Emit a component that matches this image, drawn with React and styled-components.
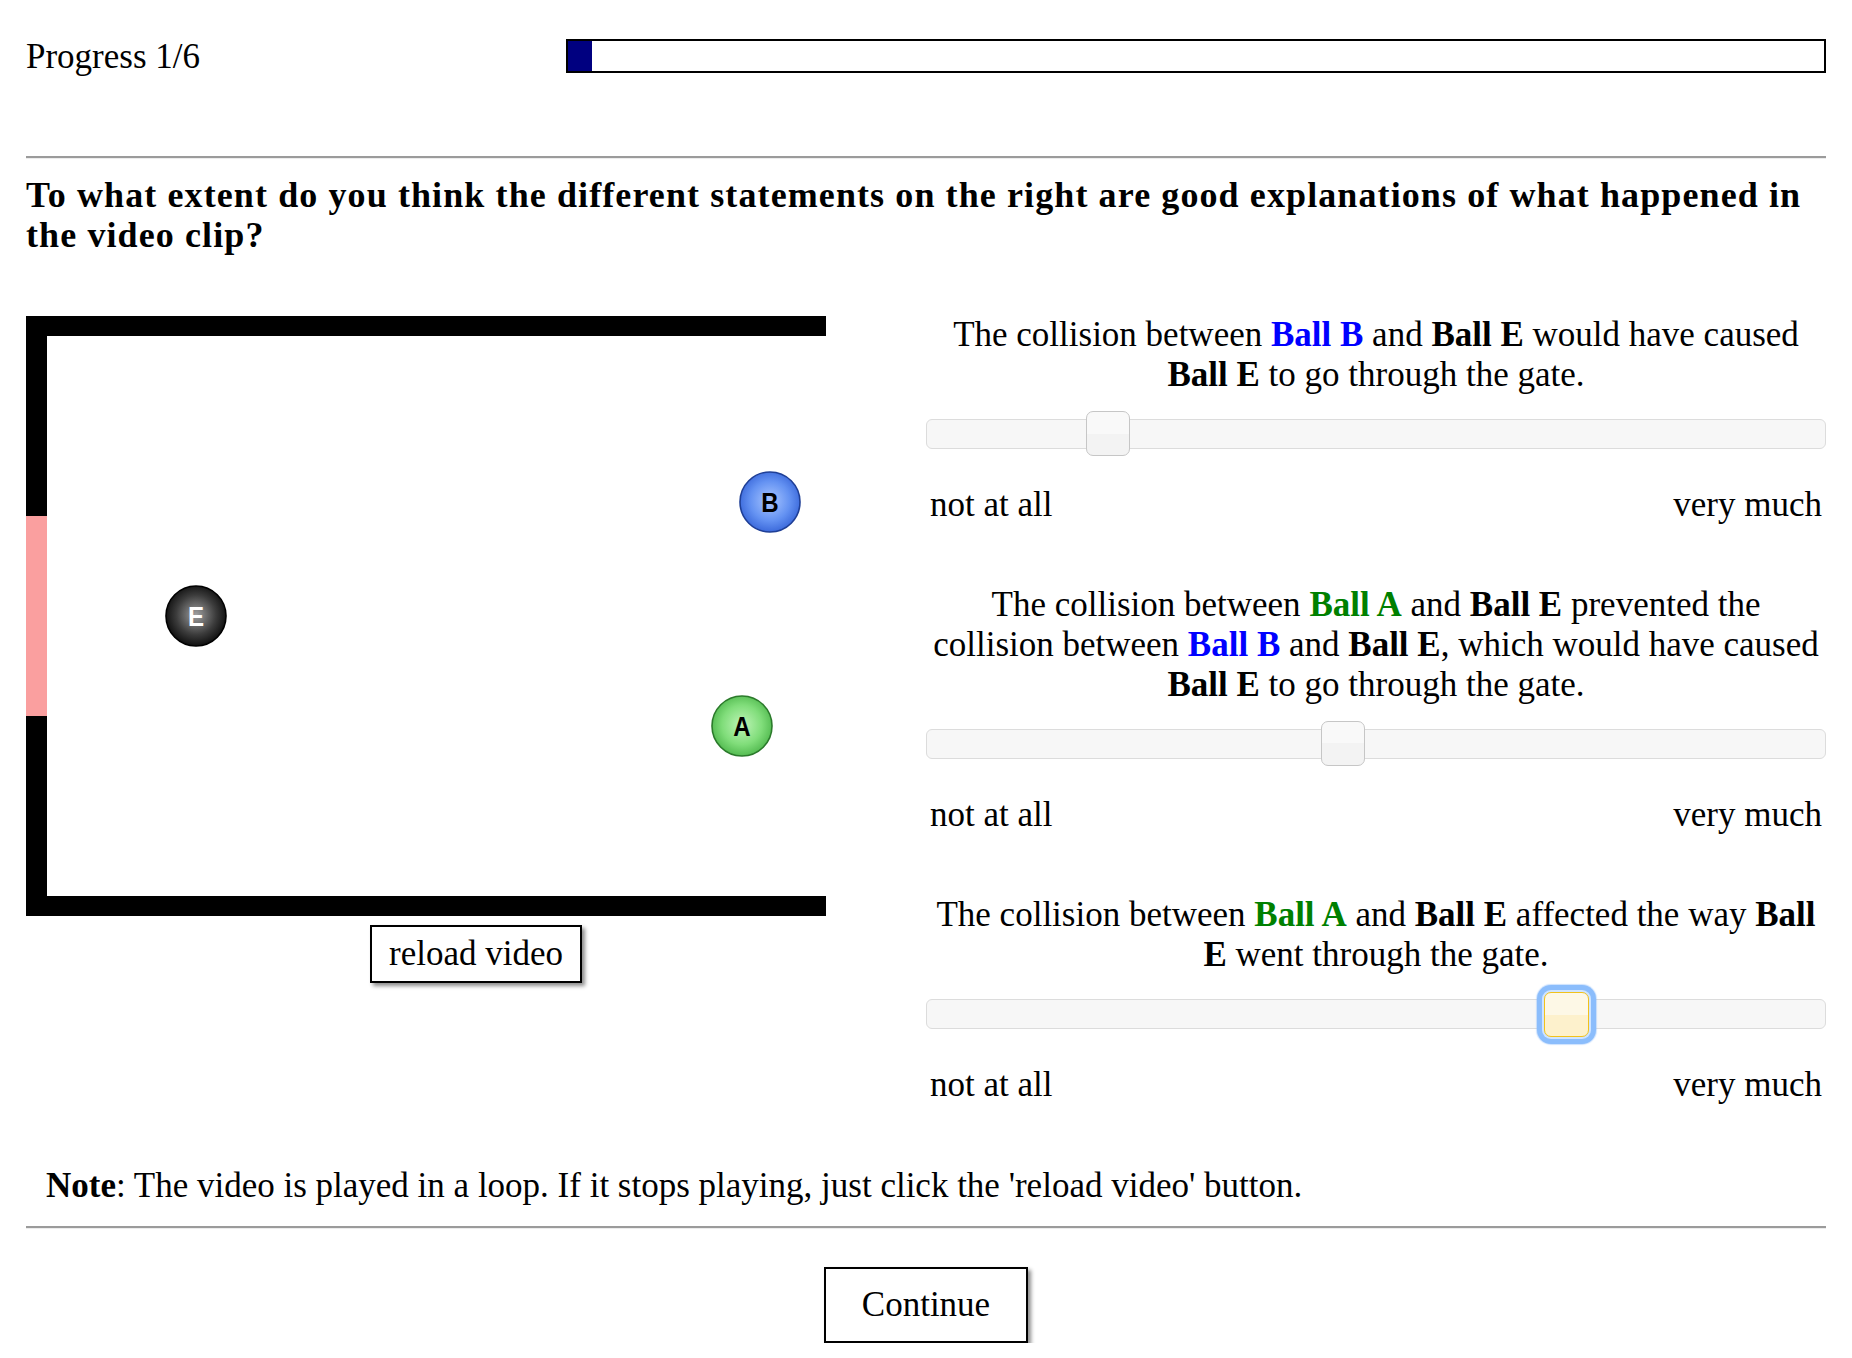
import React from 'react';
import styled, { createGlobalStyle } from 'styled-components';

const GlobalStyle = createGlobalStyle`
  body {
    margin: 0;
    background: #fff;
    color: #000;
    font-family: "Liberation Serif", "Times New Roman", serif;
  }
`;

const Page = styled.div`
  padding: 36px 26px 0 26px;
  font-size: 35px;
  line-height: 40px;
`;

const ProgressRow = styled.div`
  display: flex;
  align-items: center;
  height: 40px;
`;

const ProgressLabel = styled.div`
  width: 30%;
  padding-top: 2px;
`;

const ProgressBar = styled.div`
  flex: 1;
  height: 34px;
  box-sizing: border-box;
  border: 2px solid #000;
  background: #fff;
`;

const ProgressFill = styled.div`
  width: ${(p) => p.$pct}%;
  height: 100%;
  background: #000080;
`;

const Rule = styled.hr`
  margin: ${(p) => p.$top}px 0 0;
  height: 0;
  border: 0;
  border-top: 2px solid #9b9b9b;
  border-bottom: 1px solid #ececec;
`;

const Question = styled.h1`
  margin: 16px 0 0;
  font-size: 36px;
  line-height: 40px;
  font-weight: bold;
  letter-spacing: 1.1px;
`;

const Task = styled.div`
  display: grid;
  grid-template-columns: 1fr 1fr;
  margin-top: 60px;
`;

const VideoColumn = styled.div`
  display: flex;
  flex-direction: column;
  align-items: center;
  padding-top: 1px;
`;

const Video = styled.svg`
  display: block;
  align-self: flex-start;
`;

const Button = styled.button`
  font-family: "Liberation Serif", "Times New Roman", serif;
  font-size: 35px;
  line-height: 40px;
  color: #000;
  background: #fff;
  border: 2px solid #000;
  border-radius: 0;
  box-shadow: 3px 3px 4px rgba(0, 0, 0, 0.45);
  padding: ${(p) => (p.$big ? '16px 36px' : '7px 17px')};
  cursor: pointer;
`;

const ReloadButton = styled(Button)`
  margin-top: 9px;
`;

const Statements = styled.div`
  display: flex;
  flex-direction: column;
  gap: 60px;
`;

const StatementBlock = styled.div``;

const Statement = styled.p`
  margin: 0;
  text-align: center;
`;

const BallName = styled.b`
  color: ${(p) => p.$color || 'inherit'};
`;

const Track = styled.div`
  position: relative;
  margin-top: 24px;
  height: 30px;
  box-sizing: border-box;
  border: 1px solid #dcdcdc;
  border-radius: 6px;
  background: #f7f7f7;
`;

const Thumb = styled.span`
  position: absolute;
  top: ${(p) => (p.$focused ? '-8px' : '-9px')};
  left: ${(p) => p.$value}%;
  width: ${(p) => (p.$focused ? '45px' : '44px')};
  height: 45px;
  margin-left: -22px;
  box-sizing: border-box;
  border-radius: 7px;
  border: 1.5px solid ${(p) => (p.$focused ? '#f1c21b' : '#c6c6c6')};
  background: ${(p) =>
    p.$focused
      ? 'linear-gradient(#fdf8e6 0 50%, #fdf1cc 50% 100%)'
      : 'linear-gradient(#f9f9f9 0 50%, #f3f3f3 50% 100%)'};
  box-shadow: ${(p) =>
    p.$focused
      ? '0 0 0 2px #cfe4ff, 0 0 0 7px #8bbdfc, 0 0 1px 8px rgba(139, 189, 252, 0.45)'
      : 'none'};
`;

const Scale = styled.div`
  display: flex;
  justify-content: space-between;
  margin-top: 36px;
  padding: 0 4px;
`;

const Note = styled.p`
  margin: 61px 0 0;
  padding-left: 20px;
`;

const Footer = styled.div`
  display: flex;
  justify-content: center;
  margin-top: 38px;
`;

const BLUE = '#0000ff';
const GREEN = '#008000';

const balls = [
  { id: 'b', letter: 'B', cx: 744, cy: 186, stops: ['#a9c6ff', '#6492f2', '#3664d8'], edge: '#1f3f96', ink: '#000' },
  { id: 'e', letter: 'E', cx: 170, cy: 300, stops: ['#a0a0a0', '#3c3c3c', '#080808'], edge: '#000', ink: '#fff' },
  { id: 'a', letter: 'A', cx: 716, cy: 410, stops: ['#bff5b8', '#80dd7a', '#4db64b'], edge: '#2b7a2b', ink: '#000' },
];

function Clip() {
  return (
    <Video width="800" height="600" viewBox="0 0 800 600">
      <defs>
        {balls.map((b) => (
          <radialGradient key={b.id} id={`ball-${b.id}`} cx="50%" cy="48%" r="55%">
            <stop offset="0%" stopColor={b.stops[0]} />
            <stop offset="60%" stopColor={b.stops[1]} />
            <stop offset="100%" stopColor={b.stops[2]} />
          </radialGradient>
        ))}
      </defs>
      <rect x="0" y="0" width="800" height="600" fill="#fff" />
      <rect x="0" y="0" width="800" height="20" fill="#000" />
      <rect x="0" y="580" width="800" height="20" fill="#000" />
      <rect x="0" y="0" width="21" height="200" fill="#000" />
      <rect x="0" y="400" width="21" height="200" fill="#000" />
      <rect x="0" y="200" width="21" height="200" fill="#fa9f9f" />
      {balls.map((b) => (
        <g key={b.id}>
          <circle cx={b.cx} cy={b.cy} r="30" fill={`url(#ball-${b.id})`} stroke={b.edge} strokeWidth="1.6" />
          <text
            x={b.cx}
            y={b.cy + 10}
            textAnchor="middle"
            fontFamily="Liberation Sans, Arial, sans-serif"
            fontWeight="bold"
            fontSize="28"
            transform={`translate(${b.cx} 0) scale(0.86 1) translate(${-b.cx} 0)`}
            fill={b.ink}
          >
            {b.letter}
          </text>
        </g>
      ))}
    </Video>
  );
}

function Rating({ children, value, focused }) {
  return (
    <StatementBlock>
      <Statement>{children}</Statement>
      <Track>
        <Thumb $value={value} $focused={focused} />
      </Track>
      <Scale>
        <span>not at all</span>
        <span>very much</span>
      </Scale>
    </StatementBlock>
  );
}

export default function App() {
  return (
    <>
      <GlobalStyle />
      <Page>
        <ProgressRow>
          <ProgressLabel>Progress 1/6</ProgressLabel>
          <ProgressBar>
            <ProgressFill $pct={1.9} />
          </ProgressBar>
        </ProgressRow>
        <Rule $top={80} />
        <Question>
          To what extent do you think the different statements on the right are good
          explanations of what happened in the video clip?
        </Question>
        <Task>
          <VideoColumn>
            <Clip />
            <ReloadButton>reload video</ReloadButton>
          </VideoColumn>
          <Statements>
            <Rating value={20.2}>
              The collision between <BallName $color={BLUE}>Ball B</BallName> and{' '}
              <BallName>Ball E</BallName> would have caused <BallName>Ball E</BallName> to go
              through the gate.
            </Rating>
            <Rating value={46.3}>
              The collision between <BallName $color={GREEN}>Ball A</BallName> and{' '}
              <BallName>Ball E</BallName> prevented the
              <br />
              collision between <BallName $color={BLUE}>Ball B</BallName> and{' '}
              <BallName>Ball E</BallName>, which would have caused <BallName>Ball E</BallName> to
              go through the gate.
            </Rating>
            <Rating value={71.2} focused>
              The collision between <BallName $color={GREEN}>Ball A</BallName> and{' '}
              <BallName>Ball E</BallName> affected the way <BallName>Ball E</BallName> went
              through the gate.
            </Rating>
          </Statements>
        </Task>
        <Note>
          <b>Note</b>: The video is played in a loop. If it stops playing, just click the
          'reload video' button.
        </Note>
        <Rule $top={20} />
        <Footer>
          <Button $big>Continue</Button>
        </Footer>
      </Page>
    </>
  );
}
